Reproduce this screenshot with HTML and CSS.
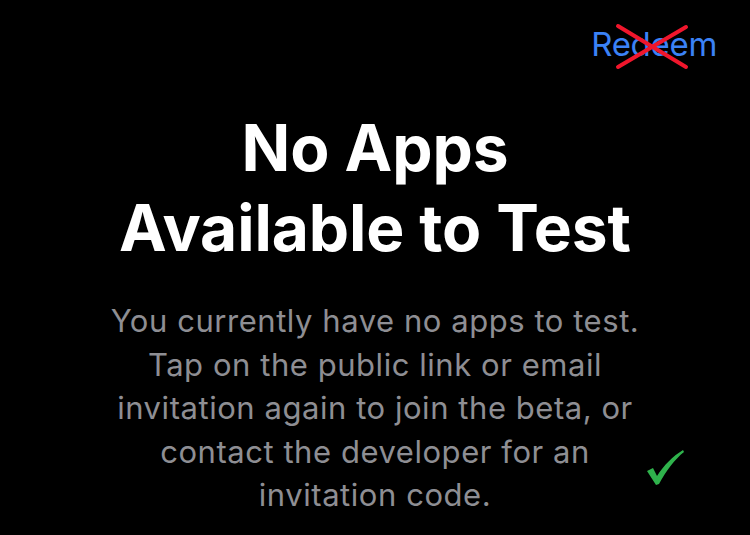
FILE: index.html
```html
<!DOCTYPE html>
<html lang="en">
<head>
<meta charset="utf-8">
<title>No Apps Available to Test</title>
<link rel="stylesheet" href="styles.css">
</head>
<body>
<div class="screen">
  <div class="topbar">
    <span class="redeem">Redeem
      <svg class="cross" width="74" height="48" viewBox="0 0 74 48" aria-hidden="true">
        <line x1="3" y1="3" x2="71" y2="44" stroke="#f0162c" stroke-width="4" stroke-linecap="round"/>
        <line x1="71" y1="4" x2="3" y2="44" stroke="#f0162c" stroke-width="4" stroke-linecap="round"/>
      </svg>
    </span>
  </div>
  <main class="content">
    <h1 class="title">No Apps<br>Available to Test</h1>
    <p class="message">You currently have no apps to test.<br>Tap on the public link or email<br>invitation again to join the beta, or<br>contact the developer for an<br>invitation code.</p>
  </main>
  <svg class="check" width="40" height="38" viewBox="0 0 40 38" aria-hidden="true">
    <path d="M1 22 L7 19 L11 27 C18 16 27 7 37 1 L38 3 C29 10 20 22 13 35 L10 36 Z" fill="#2fb24c"/>
  </svg>
</div>
</body>
</html>
```
FILE: styles.css
```css
html, body {
  margin: 0;
  padding: 0;
  background: #000;
}
.screen {
  position: relative;
  width: 750px;
  height: 535px;
  overflow: hidden;
  background: #000;
  font-family: Inter, "Noto Sans", sans-serif;
  display: flex;
  flex-direction: column;
}
.topbar {
  display: flex;
  justify-content: flex-end;
  padding: 24px 33px 0 0;
}
.redeem {
  position: relative;
  color: #3b82f6;
  font-size: 33px;
  line-height: 40px;
  letter-spacing: -0.3px;
}
.cross {
  position: absolute;
  left: 24px;
  top: -1px;
}
.content {
  display: flex;
  flex-direction: column;
  align-items: center;
  text-align: center;
}
.title {
  margin: 44px 0 0;
  color: #fff;
  font-size: 64px;
  font-weight: 700;
  line-height: 80px;
  letter-spacing: -0.1px;
}
.message {
  margin: 31px 0 0;
  color: #8e8e93;
  font-size: 31px;
  line-height: 43.5px;
  letter-spacing: 0.55px;
  white-space: nowrap;
}
.check {
  position: absolute;
  left: 646px;
  top: 449px;
}
```
